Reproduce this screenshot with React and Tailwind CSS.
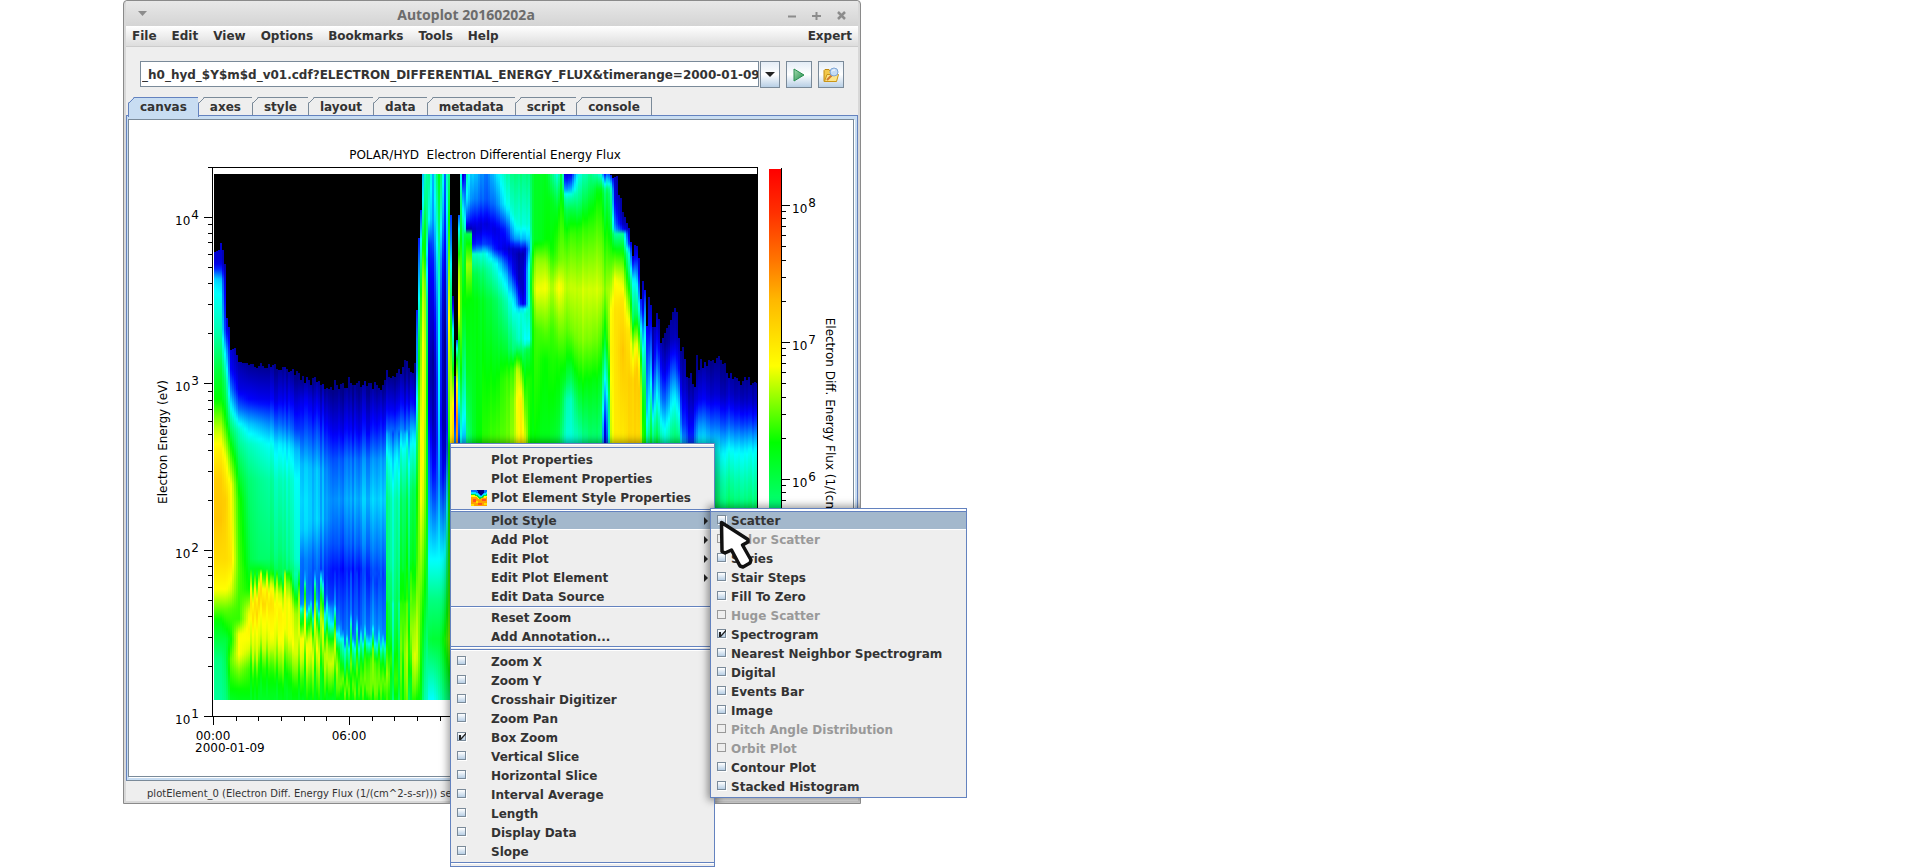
import { useMemo } from "react";

const MENUS = ["File", "Edit", "View", "Options", "Bookmarks", "Tools", "Help"];
const TABS = ["axes", "style", "layout", "data", "metadata", "script", "console"];

const PLOT_ACTIONS = ["Add Plot", "Edit Plot", "Edit Plot Element"];
const MOUSE_MODES = [
  "Zoom X",
  "Zoom Y",
  "Crosshair Digitizer",
  "Zoom Pan",
  "Box Zoom",
  "Vertical Slice",
  "Horizontal Slice",
  "Interval Average",
  "Length",
  "Display Data",
  "Slope",
];
const STYLES = [
  { label: "Scatter", active: true },
  { label: "Color Scatter", disabled: true },
  { label: "Series" },
  { label: "Stair Steps" },
  { label: "Fill To Zero" },
  { label: "Huge Scatter", disabled: true },
  { label: "Spectrogram", checked: true },
  { label: "Nearest Neighbor Spectrogram" },
  { label: "Digital" },
  { label: "Events Bar" },
  { label: "Image" },
  { label: "Pitch Angle Distribution", disabled: true },
  { label: "Orbit Plot", disabled: true },
  { label: "Contour Plot" },
  { label: "Stacked Histogram" },
];

// color table, one entry per unit of intensity
const COLORS = [
  [0, 0, 90],
  [0, 0, 140],
  [0, 0, 255],
  [0, 128, 255],
  [0, 255, 255],
  [0, 255, 128],
  [0, 255, 0],
  [128, 255, 0],
  [255, 255, 0],
  [255, 205, 0],
  [255, 128, 0],
  [255, 0, 0],
];

// intensity profiles: x, then y/intensity pairs
const PROFILES = [
  [214, 262, 1.6, 270, 2.4, 278, 3.6, 290, 4, 330, 4.6, 370, 5.5, 400, 6, 430, 7.5, 450, 8.2, 480, 9, 520, 9.1, 560, 8.7, 590, 8, 605, 7, 620, 6, 640, 5.5, 660, 5, 700, 4.8],
  [220, 262, 1.6, 270, 2.4, 280, 3.6, 295, 4, 330, 4.6, 370, 5.6, 400, 6, 430, 7.5, 450, 8.3, 480, 9, 520, 9.1, 560, 8.7, 590, 8, 605, 7, 620, 6, 640, 5.5, 660, 5, 700, 4.8],
  [225, 262, 1, 330, 2, 350, 3.5, 380, 5, 420, 6, 460, 8, 500, 9, 560, 8.7, 590, 8, 610, 6.7, 640, 5.5, 700, 5],
  [230, 320, 1, 340, 1.5, 370, 2, 390, 3, 420, 4.8, 450, 6.2, 485, 8, 560, 8.5, 590, 7.7, 610, 6.6, 640, 6, 660, 6.8, 680, 6.2, 700, 5.7],
  [238, 348, 1, 390, 1.8, 408, 2.8, 430, 4.5, 460, 5.3, 500, 6.2, 570, 6.6, 620, 6.4, 635, 8, 655, 8, 670, 7, 690, 6, 700, 5.8],
  [248, 362, 1, 400, 2, 425, 3.6, 445, 4.5, 480, 5.1, 560, 5.6, 590, 6.1, 612, 7.8, 630, 8.2, 650, 7.7, 668, 6.5, 700, 5.8],
  [250, 362, 1, 400, 2, 425, 3.6, 445, 4.5, 480, 5.1, 560, 5.4, 575, 6, 595, 7.9, 610, 8.6, 630, 7.9, 650, 7.5, 670, 6.2, 700, 5.7],
  [258, 364, 1, 400, 1.9, 425, 3.4, 445, 4.3, 480, 4.9, 560, 5.2, 578, 6.4, 590, 8.2, 605, 9, 620, 8.1, 650, 7.6, 670, 6.2, 700, 5.7],
  [280, 367, 1, 400, 1.8, 425, 2.8, 445, 3.8, 480, 4.5, 550, 5, 575, 5.4, 590, 7.4, 610, 8.2, 640, 7.9, 660, 7, 680, 6, 700, 5.7],
  [298, 373, 1, 400, 1.8, 430, 2.6, 450, 3.6, 480, 4.2, 560, 4.5, 585, 5.5, 605, 7.3, 640, 8, 660, 7.2, 680, 6.2, 700, 5.8],
  [300, 379, 1, 400, 1.8, 430, 2.5, 465, 3.5, 500, 3.7, 530, 3.6, 560, 2.9, 590, 2.8, 606, 3.2, 610, 4.8, 625, 6.3, 640, 8.2, 660, 7.6, 680, 6.4, 700, 5.8],
  [318, 382, 1, 405, 1.7, 430, 2.4, 470, 3.4, 520, 3.5, 550, 2.9, 580, 2.5, 602, 3, 610, 4.6, 630, 6.7, 650, 7.8, 670, 7, 700, 5.8],
  [335, 388, 1, 430, 1.9, 460, 2.7, 500, 3.2, 545, 2.7, 570, 2.2, 600, 2.5, 625, 3.2, 635, 5, 650, 6.8, 665, 7.9, 680, 7, 700, 5.8],
  [341, 388, 1, 430, 1.9, 460, 2.8, 500, 3.2, 545, 2.6, 570, 2.1, 600, 2.5, 640, 2.9, 647, 4.4, 662, 5, 675, 6, 688, 7, 700, 6],
  [360, 384, 1, 430, 2, 460, 3, 500, 3.5, 545, 2.9, 570, 2.3, 600, 2.6, 634, 2.9, 644, 4.2, 658, 5.5, 672, 6.3, 688, 6.8, 700, 5.9],
  [372, 385, 1, 430, 2.1, 460, 3.1, 500, 3.6, 550, 2.9, 575, 2.4, 600, 2.8, 630, 3.2, 642, 4.8, 655, 6.8, 672, 7, 688, 6.9, 700, 5.9],
  [384, 385, 1, 430, 2.3, 460, 3.3, 500, 3.7, 550, 3, 575, 2.6, 600, 2.8, 636, 3.1, 646, 4.5, 660, 5.6, 680, 6.8, 700, 5.9],
  [386, 378, 1, 410, 1.9, 435, 3, 460, 4, 500, 4.7, 560, 4.7, 600, 5, 650, 5.4, 680, 6.6, 700, 5.9],
  [405, 370, 1, 400, 1.8, 430, 3, 450, 4, 500, 5, 560, 5.5, 620, 6, 650, 6.6, 680, 6.3, 700, 5.9],
  [415, 369, 1, 405, 2.2, 435, 4, 490, 5.6, 560, 6, 620, 7.6, 650, 8, 680, 7, 700, 6],
  [417, 245, 1.4, 300, 3, 340, 5, 400, 6, 500, 6.4, 620, 7.2, 660, 7.4, 700, 6],
  [420, 205, 2, 240, 4, 265, 5.2, 300, 6.2, 350, 7, 400, 7.6, 450, 8.2, 500, 8, 600, 6.6, 700, 5.8],
  [423, 174, 4.3, 200, 5, 240, 6.6, 280, 8.1, 350, 8.6, 420, 8.3, 500, 7.5, 600, 6, 700, 4.7],
  [426, 174, 4.8, 230, 5, 260, 3.6, 300, 5, 400, 6, 440, 5.8, 500, 6, 600, 5.5, 700, 4.5],
  [428, 174, 5, 220, 4, 245, 2.3, 300, 1.7, 380, 1.4, 440, 2.4, 500, 3.2, 560, 4, 600, 5, 640, 5.5, 700, 4],
  [432, 174, 3.4, 220, 3.2, 260, 2.2, 300, 1.8, 360, 1.1, 420, 1.3, 480, 2.2, 560, 4, 600, 5, 640, 5.6, 700, 4],
  [435, 174, 4.8, 220, 4, 260, 3.2, 310, 2.4, 380, 1.6, 440, 1.6, 500, 2.6, 560, 4, 600, 5, 640, 5.6, 700, 4.2],
  [438, 174, 5.8, 240, 5, 300, 4.2, 400, 3.8, 480, 3.2, 560, 4, 600, 5, 640, 5.6, 700, 4.5],
  [441, 174, 4.8, 210, 4, 260, 2.4, 320, 1.6, 420, 1.2, 480, 2, 560, 4, 600, 5, 640, 5.8, 700, 4.8],
  [444, 174, 2.8, 230, 2.2, 280, 1.6, 340, 1, 430, 1.3, 480, 2.4, 560, 4.2, 600, 5.3, 640, 6.2, 700, 5],
  [446, 174, 4.5, 220, 3.8, 280, 3, 350, 2.4, 430, 2.2, 480, 3.5, 560, 5, 640, 6.5, 700, 5],
  [448, 174, 5, 220, 6, 270, 7, 320, 8, 380, 7, 440, 6, 600, 6.4, 640, 7, 700, 5],
  [450, 200, 2, 240, 3, 290, 5, 340, 6.4, 380, 7.4, 440, 8.4, 600, 6.5, 700, 5],
  [452, 296, 1, 330, 4, 370, 6, 410, 8.4, 440, 9],
  [454, 375, 1, 400, 1.4, 440, 3],
  [456, 330, 1, 360, 6, 390, 8.5, 420, 10, 440, 9.6],
  [458, 200, 1.2, 240, 5, 270, 7.2, 310, 8.2, 340, 6, 400, 4, 440, 2.5],
  [460, 174, 4, 200, 5, 260, 6.5, 330, 6.6, 370, 6, 440, 4],
  [462, 174, 1.5, 195, 3.2, 230, 5, 300, 6, 380, 5, 440, 3.5],
  [465, 174, 2.2, 205, 3, 229, 4, 235, 5.8, 300, 6, 440, 3.4],
  [466, 174, 4.6, 200, 3.8, 220, 2.4, 229, 1.4, 233, 5.4, 265, 7.3, 300, 6, 370, 5.8, 440, 5],
  [470, 174, 3.6, 200, 3.2, 220, 2.2, 229, 1.4, 233, 5.4, 265, 7.2, 300, 6, 370, 5.8, 440, 5.4],
  [472, 174, 3.6, 200, 3, 220, 2, 230, 1.4, 248, 2.3, 253, 4.4, 275, 5.5, 300, 5.9, 440, 5.6],
  [485, 174, 2.9, 200, 2.7, 225, 1.7, 245, 2.6, 253, 4.2, 270, 5, 300, 5.7, 440, 6.4],
  [495, 174, 3.7, 205, 2.9, 230, 1.7, 250, 2.1, 262, 4, 300, 5.3, 440, 6.5],
  [505, 174, 4.6, 205, 4, 230, 2.2, 250, 1.6, 275, 3.5, 300, 4.6, 330, 5.2, 350, 5.6, 380, 6.4, 440, 6.7],
  [513, 174, 5, 215, 4.4, 238, 3.2, 250, 1.4, 272, 1.8, 300, 3.8, 330, 4.6, 350, 5, 370, 6.4, 400, 7, 440, 7.2],
  [517, 174, 5, 225, 4.3, 238, 3.4, 251, 1.3, 280, 1.5, 305, 3, 312, 4.2, 340, 4.5, 352, 5.6, 370, 7.8, 400, 8.3, 440, 8],
  [521, 174, 5, 225, 4.3, 240, 3.4, 252, 1.3, 290, 1.3, 305, 1.8, 310, 4.2, 340, 4.5, 360, 5.6, 385, 7.4, 400, 8.2, 440, 8.5],
  [524, 174, 5, 225, 4.3, 240, 3.4, 250, 1.5, 270, 2, 290, 2, 305, 2.2, 310, 4.5, 342, 4, 350, 5.4, 380, 6, 440, 7.8],
  [529, 174, 5, 225, 4.3, 248, 3.4, 255, 4, 270, 4.8, 290, 5, 342, 4, 346, 5.4, 380, 6.3, 440, 6],
  [531, 174, 5.6, 240, 5.6, 260, 6, 285, 6.6, 310, 6, 440, 6],
  [535, 174, 5.8, 240, 5.8, 260, 7.2, 290, 8, 310, 7.3, 330, 6.6, 440, 6],
  [545, 174, 5.8, 240, 6, 262, 7.2, 287, 8, 310, 7.3, 335, 6.6, 360, 6, 440, 5.8],
  [551, 174, 5, 200, 5.8, 250, 6, 287, 7.3, 330, 6.4, 400, 6, 440, 5.7],
  [557, 174, 4.2, 190, 5, 210, 5.8, 260, 6.8, 287, 8.1, 320, 7.1, 360, 6.2, 440, 5.6],
  [561, 174, 6, 260, 7, 287, 8, 320, 7.2, 370, 6, 440, 5],
  [564, 174, 1.6, 190, 3.2, 195, 4.4, 210, 5.4, 235, 6.2, 287, 7.5, 330, 6.7, 380, 5.6, 400, 4.8, 440, 4.4],
  [570, 174, 1.8, 190, 3.4, 195, 4.4, 210, 5.4, 235, 6.4, 287, 7.5, 330, 6.8, 380, 5.2, 400, 4.4, 440, 4.2],
  [577, 174, 4.2, 200, 5, 230, 6.3, 290, 7.6, 340, 7, 380, 6, 440, 4.6],
  [590, 174, 5, 205, 5.9, 230, 6.5, 290, 7.7, 340, 7, 380, 6, 440, 5.2],
  [601, 174, 4.2, 190, 6, 230, 6.6, 290, 7.6, 340, 6.6, 380, 5.7, 440, 5],
  [603, 174, 2, 190, 5, 240, 6.2, 290, 7, 340, 5.5, 400, 3, 430, 1.4, 440, 1.4],
  [607, 174, 3, 190, 5.5, 240, 6.3, 290, 7.4, 340, 6.5, 400, 4, 440, 3],
  [610, 174, 2, 190, 4.6, 250, 6.2, 275, 7, 310, 8, 350, 8.2, 440, 7.5],
  [614, 176, 1.4, 200, 1.8, 225, 3, 231, 3.5, 234, 4.8, 255, 6.4, 280, 8, 310, 8.6, 440, 8.4],
  [622, 212, 1, 225, 1.5, 230, 2.2, 234, 4.8, 255, 6.2, 275, 7.4, 300, 8.5, 350, 9.1, 440, 8.4],
  [628, 230, 1.4, 245, 2.6, 252, 4.2, 270, 5, 300, 6.8, 330, 8.5, 380, 9, 440, 8.8],
  [632, 255, 1.4, 265, 2.4, 280, 4, 320, 5.4, 345, 7.4, 380, 8.9, 440, 8.8],
  [636, 240, 1, 262, 2.4, 285, 4, 315, 5.4, 345, 8, 370, 9.1, 440, 8.8],
  [639, 275, 1.2, 300, 3, 325, 5, 360, 7.6, 390, 9, 440, 8.7],
  [641, 310, 1.4, 330, 3, 360, 4.5, 400, 6, 440, 6.5, 510, 7],
  [644, 275, 1, 310, 3, 340, 4, 390, 5.4, 440, 6, 510, 6.5],
  [647, 330, 1, 370, 1.6, 410, 2.4, 440, 4, 510, 5],
  [649, 292, 1, 320, 2.2, 360, 4, 410, 5.6, 440, 6, 510, 6.4],
  [652, 325, 1, 360, 1.5, 400, 3, 430, 4.6, 470, 5.5, 510, 6],
  [657, 310, 1, 340, 2, 380, 3.6, 420, 5, 440, 5.6, 510, 6],
  [661, 342, 1, 370, 1.6, 400, 2.6, 430, 4, 460, 5, 510, 5.6],
  [673, 312, 1, 340, 1.4, 370, 2.7, 395, 3.8, 430, 4.9, 510, 5.7],
  [678, 330, 1, 370, 2, 400, 3.4, 440, 5, 510, 5.7],
  [681, 350, 1, 390, 1.6, 425, 2.5, 450, 3.8, 510, 5.2],
  [691, 382, 1, 410, 1.5, 440, 2.1, 465, 3, 510, 5],
  [697, 360, 1, 400, 1.9, 425, 3.2, 450, 4.2, 510, 5.2],
  [715, 360, 1, 395, 1.6, 425, 2.8, 450, 4, 480, 4.8, 510, 5.3],
  [757, 380, 1, 402, 1.4, 422, 2.3, 437, 3.2, 452, 4, 480, 4.6, 510, 5.2],
];

// top of the measured flux at each time, black above
const EDGE = [
  214, 252, 219, 250, 220, 243, 222, 250, 224, 264, 226, 318, 229, 332, 230, 350, 235, 348, 237, 362, 250, 364, 262, 367, 282, 368,
  296, 373, 302, 380, 318, 382, 326, 388, 338, 388, 350, 383, 365, 384, 382, 387, 386, 379, 402, 370, 415, 369, 417, 250, 419, 225, 421, 195,
  422, 174, 448, 174, 450, 215, 452, 296, 454, 376, 456, 340, 458, 215, 460, 174, 609, 174, 612, 178, 616, 176, 619, 205, 621, 190, 622, 212, 628, 228, 632, 256,
  635, 240, 638, 258, 640, 296, 643, 277, 646, 330, 649, 292, 651, 328, 655, 322, 657, 312, 660, 342, 668, 322,
  673, 311, 676, 314, 679, 350, 683, 350, 686, 374, 694, 386, 696, 354, 698, 370, 710, 362, 718, 358, 726, 376, 740, 384, 757, 380,
];

const COL = 2;
const STEP = 5;

const noise = (n) => {
  const s = Math.sin(n * 127.1 + 11.7) * 43758.5453;
  return (s - Math.floor(s)) * 2 - 1;
};

function along(list, start, pos) {
  if (pos <= list[start]) return list[start + 1];
  for (let i = start; i + 3 < list.length; i += 2) {
    if (pos <= list[i + 2]) {
      const t = (pos - list[i]) / (list[i + 2] - list[i]);
      return list[i + 1] + t * (list[i + 3] - list[i + 1]);
    }
  }
  return list[list.length - 1];
}

function colorAt(v) {
  const c = Math.max(0, Math.min(10.99, v));
  const i = Math.floor(c);
  const rgb = COLORS[i].map((a, k) => Math.round(a + (COLORS[i + 1][k] - a) * (c - i)));
  return `rgb(${rgb.join(",")})`;
}

function buildColumns() {
  const cols = [];
  for (let x = 214; x < 757; x += COL) {
    let k = 0;
    while (k < PROFILES.length - 2 && x > PROFILES[k + 1][0]) k++;
    const a = PROFILES[k];
    const b = PROFILES[k + 1];
    const t = Math.max(0, Math.min(1, (x - a[0]) / (b[0] - a[0])));
    const calm = x < 248 || (x > 415 && x < 640);
    const spike = noise(x * 3.3) > 0.7 ? 1 : 0;
    let edge = along(EDGE, 0, x);
    if (!calm) edge += noise(x) * 4 - (noise(x * 1.7) > 0.7 ? 6 : 0);
    const stops = [];
    const last = x > 450 ? 520 : 700;
    for (let y = 174; y <= last + 1; y += STEP) {
      const low = y > 570 && x > 248 && x < 415;
      const yy = low ? y + noise(x * 0.9) * 9 + spike * (x > 290 ? 26 : 10) : y;
      let v = along(a, 1, yy) * (1 - t) + along(b, 1, yy) * t;
      if (x > 268 && x < 415) v += noise(x * 2.3) * (y < 650 ? 0.22 : 0.08);
      else if (x >= 640) v += noise(x * 2.3) * 0.15;
      else if (x > 462) v += noise(x * 2.3) * 0.1;
      if (x > 385 && x < 412 && y > 430) v += noise(x * 5.1) * (y > 600 ? 0.9 : 0.45);
      stops.push([(y - 174) / (last - 174), colorAt(v)]);
    }
    cols.push({ x, edge: Math.max(174, Math.round(edge)), stops, last });
  }
  return cols;
}

function Spectrogram() {
  const cols = useMemo(buildColumns, []);
  return (
    <g shapeRendering="crispEdges">
      <defs>
        {cols.map((c) => (
          <linearGradient key={c.x} id={`col${c.x}`} x1="0" y1="0" x2="0" y2="1">
            {c.stops.map(([o, color], i) => (
              <stop key={i} offset={o} stopColor={color} />
            ))}
          </linearGradient>
        ))}
      </defs>
      {cols.map((c) => (
        <rect key={c.x} x={c.x} y={174} width={COL} height={c.last - 174} fill={`url(#col${c.x})`} />
      ))}
      {cols.map((c) => (
        <rect key={c.x} x={c.x} y={174} width={COL} height={c.edge - 174} fill="#000" />
      ))}
    </g>
  );
}

const MINOR = [2, 3, 4, 5, 6, 7, 8, 9].map(Math.log10);

function Plot() {
  const yTicks = [1, 2, 3, 4].map((p) => ({ p, y: Math.round(716 - (p - 1) * 166.4) }));
  const zTicks = [8, 7, 6].map((p) => ({ p, y: Math.round(205 + (8 - p) * 137) }));
  return (
    <svg
      viewBox="129 120 724 656"
      className="block h-auto w-full bg-white fill-black font-['DejaVu_Sans'] text-[12px] font-normal"
      role="img"
      aria-label="POLAR/HYD Electron Differential Energy Flux"
    >
      <defs>
        <linearGradient id="bar" x1="0" y1="0" x2="0" y2="1">
          <stop offset="0" stopColor="#ff0000" />
          <stop offset="0.08" stopColor="#ff3000" />
          <stop offset="0.17" stopColor="#ff7800" />
          <stop offset="0.24" stopColor="#ffb800" />
          <stop offset="0.36" stopColor="#ffff00" />
          <stop offset="0.5" stopColor="#00ff00" />
          <stop offset="0.75" stopColor="#00ffff" />
          <stop offset="0.95" stopColor="#0000ff" />
          <stop offset="1" stopColor="#00008c" />
        </linearGradient>
      </defs>
      <text x="485" y="159" textAnchor="middle" className="whitespace-pre">
        {"POLAR/HYD  Electron Differential Energy Flux"}
      </text>
      <Spectrogram />
      <g stroke="#000" strokeWidth="1" fill="none" shapeRendering="crispEdges">
        <rect x="212.5" y="167.5" width="545" height="549" />
        {yTicks.map(({ p, y }) => (
          <g key={p}>
            <path d={`M204 ${y + 0.5}H212`} />
            {MINOR.map((m) => {
              const ty = Math.round(y - m * 166.4) + 0.5;
              return ty > 166 ? <path key={m} d={`M208 ${ty}H212`} /> : null;
            })}
          </g>
        ))}
        {Array.from({ length: 25 }, (_, i) => (
          <path key={i} d={`M${Math.round(213 + i * 22.65) + 0.5} 716V${i % 6 === 0 ? 725 : 721}`} />
        ))}
      </g>
      <rect x="769" y="169" width="12" height="547" fill="url(#bar)" />
      <g stroke="#000" strokeWidth="1" shapeRendering="crispEdges">
        <path d="M781.5 168V716" />
        {zTicks.map(({ p, y }) => (
          <g key={p}>
            <path d={`M782 ${y + 0.5}H790`} />
            {MINOR.map((m) => {
              const ty = Math.round(y - m * 137) + 0.5;
              return ty > 169 ? <path key={m} d={`M782 ${ty}H786`} /> : null;
            })}
            {p === 6 && [9, 8, 7].map((n) => (
              <path key={n} d={`M782 ${Math.round(y + (1 - Math.log10(n)) * 137) + 0.5}H786`} />
            ))}
          </g>
        ))}
      </g>
      {yTicks.map(({ p, y }) => (
        <text key={p} x="175" y={y + 8}>
          10<tspan dx="1" dy="-6">{p}</tspan>
        </text>
      ))}
      {zTicks.map(({ p, y }) => (
        <text key={p} x="792" y={y + 8}>
          10<tspan dx="1" dy="-6">{p}</tspan>
        </text>
      ))}
      <text x="213" y="740" textAnchor="middle">00:00</text>
      <text x="195" y="752">2000-01-09</text>
      <text x="349" y="740" textAnchor="middle">06:00</text>
      <text transform="translate(167 442) rotate(-90)" textAnchor="middle">Electron Energy (eV)</text>
      <text transform="translate(826 442) rotate(90)" textAnchor="middle">
        Electron Diff. Energy Flux (1/(cm^2-s-sr))
      </text>
    </svg>
  );
}

function Check({ label, checked, disabled, wide, active }) {
  return (
    <label
      className={`flex h-[19px] items-center pl-[6px] ${wide ? "gap-[25px]" : "gap-[5px]"} ${
        active ? "border-t border-b border-t-[#6382bf] border-b-white bg-[#a3b8cc]" : ""
      } ${disabled ? "text-[#999999]" : ""}`}
    >
      <span className="relative mb-[2px] block h-[9px] w-[9px]">
        <input
          type="checkbox"
          defaultChecked={checked}
          disabled={disabled}
          className="peer block h-[9px] w-[9px] appearance-none border border-[#7a8a99] bg-linear-to-b from-white to-[#b8cfe5] shadow-[1px_1px_0_#ffffff] disabled:border-[#999999] disabled:bg-none disabled:shadow-none"
        />
        <svg viewBox="0 0 9 9" className="pointer-events-none absolute inset-0 hidden h-[9px] w-[9px] overflow-visible peer-checked:block">
          <path d="M2 3h2v3l5-5.5v2L4 8H2z" fill="#222" />
        </svg>
      </span>
      <span>{label}</span>
    </label>
  );
}

function Item({ label, arrow, active }) {
  return (
    <button
      type="button"
      className={`flex h-[19px] w-full items-center pl-10 text-left ${
        active ? "border-t border-b border-t-[#6382bf] border-b-white bg-[#a3b8cc]" : ""
      }`}
    >
      {label}
      {arrow && (
        <svg viewBox="0 0 4 8" className="mr-[6px] ml-auto h-2 w-1">
          <path d="M0 0L4 4L0 8Z" fill="#222" />
        </svg>
      )}
    </button>
  );
}

function ContextMenu() {
  return (
    <div className="absolute top-[443px] left-[450px] w-[265px] overflow-hidden border border-[#6382bf] bg-[#eeeeee]">
      <div className="mb-[2px] h-1 border-t border-b border-t-white border-b-[#6382bf]" />
      <Item label="Plot Properties" />
      <Item label="Plot Element Properties" />
      <button type="button" className="flex h-5 w-full items-center gap-1 pl-5 text-left">
        <svg viewBox="0 0 16 16" className="h-4 w-4" shapeRendering="crispEdges">
          <rect width="16" height="16" fill="#ffa000" />
          <path d="M0 0h16v7l-2 1-3-1-2 2H7L5 7H0z" fill="#ffff00" />
          <path d="M0 0h16v6h-3l-2 2-2 1-2-1-2-2-2-1H0z" fill="#00e040" />
          <path d="M0 0h16v4l-3 1-3 2H8L6 5 3 4H0z" fill="#00e8ff" />
          <path d="M0 0h16v2l-3 1-2 3H9L6 3 3 2H0z" fill="#0070ff" />
          <path d="M6 0h7v2l-2 3H9L7 2z" fill="#000080" />
          <path d="M2 9h3v3H2zM11 9h4v2h-4zM7 13h4v2H7z" fill="#ff5020" />
          <path d="M5 11h2v2H5zM0 14h3v2H0zM13 13h3v2h-3z" fill="#ffe000" />
        </svg>
        Plot Element Style Properties
      </button>
      <div className="h-[3px] border-b border-white pt-px">
        <div className="h-px bg-[#6382bf]" />
      </div>
      <Item label="Plot Style" arrow active />
      {PLOT_ACTIONS.map((a) => (
        <Item key={a} label={a} arrow />
      ))}
      <Item label="Edit Data Source" />
      <div className="h-[2px] border-t border-[#6382bf] bg-white" />
      <Item label="Reset Zoom" />
      <Item label="Add Annotation..." />
      <div className="mb-px h-[2px] border-t border-[#6382bf] bg-white" />
      <div className="mb-px h-[2px] border-t border-[#6382bf] bg-white" />
      {MOUSE_MODES.map((m) => (
        <Check key={m} label={m} checked={m === "Box Zoom"} wide />
      ))}
      <div className="mt-px mb-[2px] h-[2px] border-t border-[#6382bf] bg-white" />
      <div className="pointer-events-none absolute top-[64px] left-[259px] h-[290px] w-[257px] shadow-[0_0_8px_2px_rgba(0,0,0,0.45)]" />
    </div>
  );
}

function StyleMenu() {
  return (
    <div className="absolute top-[508px] left-[710px] w-[257px] border border-[#6382bf] bg-[#eeeeee] pb-px">
      <div className="h-[2px] bg-white" />
      {STYLES.map((s) => (
        <Check key={s.label} {...s} />
      ))}
      <svg viewBox="0 0 36 52" className="pointer-events-none absolute top-[8px] left-[6px] h-[52px] w-9">
        <path
          d="M4.500 5.500L31 22.500L31 25L25.500 28L34 43L33 46L26 50L23 49L14.500 33L8 36L5 34.500Z"
          fill="#fff"
          stroke="#111"
          strokeWidth="3.500"
          strokeLinejoin="round"
        />
      </svg>
    </div>
  );
}

function Tab({ label, active }) {
  return (
    <button
      type="button"
      role="tab"
      aria-selected={!!active}
      className={`relative px-[11px] ${
        active
          ? "h-5 border-t border-r border-l border-[#6382bf] bg-[#c8ddf2] pb-px"
          : "h-[18px] border-t border-r border-[#7a8a99] bg-[#eeeeee]"
      }`}
    >
      <svg viewBox="0 0 7 7" className="absolute -top-px -left-px h-[7px] w-[7px]">
        <path d="M0 0H6L0 6Z" fill="#eee" />
        <path d="M0.5 6.5L6.5 0.5" stroke={active ? "#6382bf" : "#7a8a99"} />
      </svg>
      {label}
    </button>
  );
}

const toolButton =
  "flex h-[27px] items-center justify-center border border-[#7a8a99] bg-linear-to-b from-[#e4edf6] via-white to-[#b8cfe5]";

function AppWindow() {
  return (
    <div className="relative ml-[123px] w-[738px] overflow-hidden rounded-t border border-[#8a8a8a] bg-[#d8d8d8] px-[2px] pb-[2px]">
      <header className="flex h-[25px] items-center bg-linear-to-b from-[#e8e8e8] to-[#d4d4d4] pr-3 pl-3 text-[#999999]">
        <button type="button" aria-label="Window menu" className="w-[60px]">
          <svg viewBox="0 0 10 6" className="h-[6px] w-[10px]">
            <path d="M0 0H9L4.500 5Z" fill="#8c8c8c" />
          </svg>
        </button>
        <h1 className="flex-1 pt-[2px] text-center font-['Noto_Sans'] text-[14px] leading-5 font-bold text-[#6c6c6c]">
          Autoplot 20160202a
        </h1>
        <div className="flex w-28 justify-end gap-4 pt-1">
          <button type="button" aria-label="Minimize">
            <svg viewBox="0 0 9 9" className="h-[9px] w-[9px]"><path d="M1 5.500H9" stroke="#8c8c8c" strokeWidth="2" /></svg>
          </button>
          <button type="button" aria-label="Maximize">
            <svg viewBox="0 0 9 9" className="h-[9px] w-[9px]"><path d="M0 5H9M4.500 1V9" stroke="#8c8c8c" strokeWidth="2" /></svg>
          </button>
          <button type="button" aria-label="Close">
            <svg viewBox="0 0 9 9" className="h-[9px] w-[9px]"><path d="M1 1L8 8M8 1L1 8" stroke="#8c8c8c" strokeWidth="2.500" /></svg>
          </button>
        </div>
      </header>

      <div className="bg-[#eeeeee]">
        <nav className="flex h-[21px] items-center gap-[15px] border-b border-[#cccccc] bg-linear-to-b from-white to-[#dddddd] px-[6px]">
          {MENUS.map((m) => (
            <button key={m} type="button">{m}</button>
          ))}
          <button type="button" className="ml-auto">Expert</button>
        </nav>

        <div className="flex px-[14px] pt-[14px]">
          <input
            type="text"
            aria-label="Data source"
            defaultValue="_h0_hyd_$Y$m$d_v01.cdf?ELECTRON_DIFFERENTIAL_ENERGY_FLUX&timerange=2000-01-09"
            className="mb-px h-[26px] min-w-0 flex-1 border border-[#7a8a99] bg-white pt-px pl-px font-bold text-[#333333]"
          />
          <button type="button" aria-label="Recent" className={`${toolButton} ml-px w-5`}>
            <svg viewBox="0 0 10 5" className="h-[5px] w-[10px]"><path d="M0 0H10L5 5Z" fill="#222" /></svg>
          </button>
          <button type="button" aria-label="Go" className={`${toolButton} ml-[6px] w-[26px]`}>
            <svg viewBox="0 0 12 14" className="h-[14px] w-3">
              <defs>
                <linearGradient id="go" x1="0" y1="0" x2="1" y2="1">
                  <stop offset="0" stopColor="#a5dcb0" />
                  <stop offset="1" stopColor="#1f8a48" />
                </linearGradient>
              </defs>
              <path d="M1 1L11 7L1 13Z" fill="url(#go)" stroke="#2a8f50" strokeLinejoin="round" />
            </svg>
          </button>
          <button type="button" aria-label="Browse" className={`${toolButton} ml-[6px] w-[26px]`}>
            <svg viewBox="0 0 16 16" className="h-4 w-4">
              <path d="M1 14.500V3.500L2 2.500H6L7 4H13V14.500Z" fill="#f3c84b" stroke="#c08a10" />
              <path d="M1.500 14.500L4 7.500H15.500L13.500 14.500Z" fill="#fde58a" stroke="#c99518" />
              <path d="M8.500 8.500L4.500 12.500" stroke="#d07a30" strokeWidth="2" strokeLinecap="round" />
              <circle cx="11" cy="5" r="4" fill="#c5dcf5" stroke="#7fa6d6" />
              <path d="M9 4.500Q10 2.500 12 3" stroke="#fff" fill="none" />
            </svg>
          </button>
        </div>

        <div role="tablist" className="relative mt-[9px] -mb-[2px] flex items-start pl-[2px]">
          <Tab label="canvas" active />
          {TABS.map((t) => (
            <Tab key={t} label={t} />
          ))}
        </div>
        <div className="border border-t-[#6382bf] border-r-[#6382bf] border-b-[#7a8a99] border-l-[#6382bf] bg-[#c8ddf2] pt-[3px] pr-[3px] pb-[3px] pl-px">
          <div className="border border-[#7a8a99] shadow-[1px_1px_0_#ffffff]">
            <Plot />
          </div>
        </div>
        <footer className="flex h-5 items-center pt-[6px] pl-[21px] text-[10px] leading-[12px] font-normal whitespace-nowrap">
          plotElement_0 (Electron Diff. Energy Flux (1/(cm^2-s-sr))) selected
        </footer>
      </div>

      {/* menu shadows, cut off at the window frame */}
      <div className="pointer-events-none absolute top-[442px] left-[326px] h-[424px] w-[265px] shadow-[0_0_8px_2px_rgba(0,0,0,0.4)]" />
      <div className="pointer-events-none absolute top-[507px] left-[586px] h-[290px] w-[257px] shadow-[0_0_8px_2px_rgba(0,0,0,0.4)]" />
    </div>
  );
}

export default function App() {
  return (
    <main className="relative min-h-screen overflow-hidden bg-white font-['DejaVu_Sans',sans-serif] text-[12px] leading-4 font-bold text-[#333333]">
      <AppWindow />
      <ContextMenu />
      <StyleMenu />
    </main>
  );
}
